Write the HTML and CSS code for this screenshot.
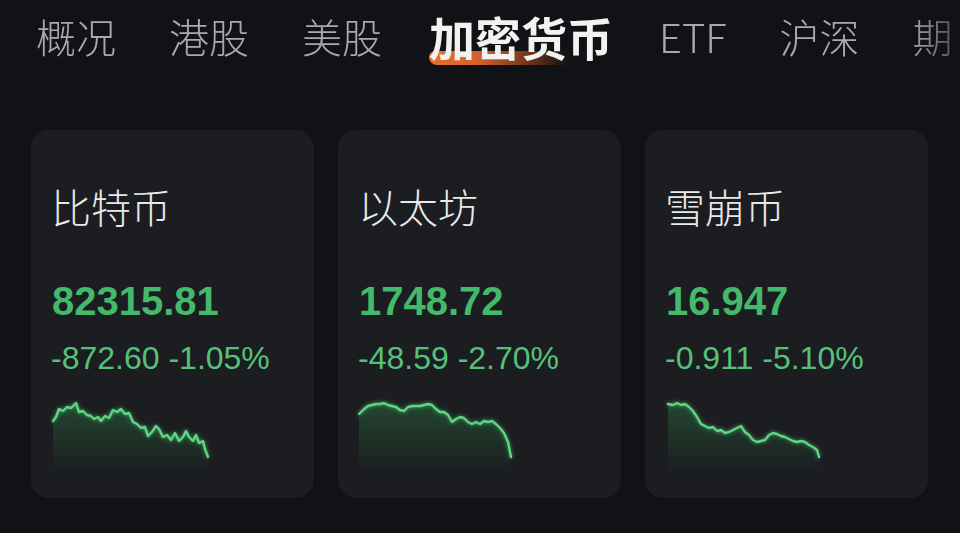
FILE: index.html
```html
<!DOCTYPE html>
<html lang="zh-CN">
<head>
<meta charset="utf-8">
<title>加密货币</title>
<link rel="stylesheet" href="styles.css">
</head>
<body>
<div class="page">
  <nav class="tabs">
    <span class="tab">概况</span>
    <span class="tab">港股</span>
    <span class="tab">美股</span>
    <span class="tab active"><span class="tab-bar"></span><span class="tab-text">加密货币</span></span>
    <span class="tab">ETF</span>
    <span class="tab">沪深</span>
    <span class="tab">期</span>
  </nav>

  <section class="cards">
    <article class="card">
      <h2 class="name">比特币</h2>
      <div class="price">82315.81</div>
      <div class="change">-872.60 -1.05%</div>
      <svg class="spark" viewBox="0 0 180 75" width="180" height="75">
        <defs>
          <linearGradient id="g1" x1="0" y1="0" x2="0" y2="1">
            <stop offset="0" stop-color="#2f9e55" stop-opacity="0.32"/>
            <stop offset="1" stop-color="#2f9e55" stop-opacity="0"/>
          </linearGradient>
        </defs>
        <path class="area" fill="url(#g1)" d="M2,24 L5,20 L8,12 L12,14 L16,10 L20,11 L25,6 L28,15 L32,14 L36,18 L40,19 L43,22 L47,20 L50,24 L54,19 L58,21 L62,13 L66,15 L70,12 L74,17 L78,16 L82,25 L86,27 L90,31 L94,30 L97,39 L101,35 L105,29 L108,32 L112,40 L116,38 L120,43 L124,36 L128,44 L132,40 L135,34 L138,40 L142,44 L145,38 L148,46 L152,44 L154,52 L157,60 L157,75 L2,75 Z"/>
        <path class="line" d="M2,24 L5,20 L8,12 L12,14 L16,10 L20,11 L25,6 L28,15 L32,14 L36,18 L40,19 L43,22 L47,20 L50,24 L54,19 L58,21 L62,13 L66,15 L70,12 L74,17 L78,16 L82,25 L86,27 L90,31 L94,30 L97,39 L101,35 L105,29 L108,32 L112,40 L116,38 L120,43 L124,36 L128,44 L132,40 L135,34 L138,40 L142,44 L145,38 L148,46 L152,44 L154,52 L157,60"/>
      </svg>
    </article>

    <article class="card">
      <h2 class="name">以太坊</h2>
      <div class="price">1748.72</div>
      <div class="change">-48.59 -2.70%</div>
      <svg class="spark" viewBox="0 0 180 75" width="180" height="75">
        <defs>
          <linearGradient id="g2" x1="0" y1="0" x2="0" y2="1">
            <stop offset="0" stop-color="#2f9e55" stop-opacity="0.32"/>
            <stop offset="1" stop-color="#2f9e55" stop-opacity="0"/>
          </linearGradient>
        </defs>
        <path class="area" fill="url(#g2)" d="M1,17 L6,12 L10,9 L14,8 L18,7 L22,7 L26,6 L30,8 L34,9 L38,10 L42,13 L46,14 L50,10 L54,9 L58,9 L62,9 L66,8 L70,7 L74,8 L78,12 L82,15 L86,15 L90,18 L94,25 L98,22 L102,20 L106,21 L110,25 L114,27 L118,25 L122,27 L126,24 L130,25 L134,24 L138,27 L142,31 L146,36 L150,45 L153,60 L153,75 L1,75 Z"/>
        <path class="line" d="M1,17 L6,12 L10,9 L14,8 L18,7 L22,7 L26,6 L30,8 L34,9 L38,10 L42,13 L46,14 L50,10 L54,9 L58,9 L62,9 L66,8 L70,7 L74,8 L78,12 L82,15 L86,15 L90,18 L94,25 L98,22 L102,20 L106,21 L110,25 L114,27 L118,25 L122,27 L126,24 L130,25 L134,24 L138,27 L142,31 L146,36 L150,45 L153,60"/>
      </svg>
    </article>

    <article class="card">
      <h2 class="name">雪崩币</h2>
      <div class="price">16.947</div>
      <div class="change">-0.911 -5.10%</div>
      <svg class="spark" viewBox="0 0 180 75" width="180" height="75">
        <defs>
          <linearGradient id="g3" x1="0" y1="0" x2="0" y2="1">
            <stop offset="0" stop-color="#2f9e55" stop-opacity="0.32"/>
            <stop offset="1" stop-color="#2f9e55" stop-opacity="0"/>
          </linearGradient>
        </defs>
        <path class="area" fill="url(#g3)" d="M3,7 L8,8 L12,6 L16,8 L20,7 L24,10 L28,14 L32,20 L36,27 L40,29 L44,31 L48,30 L52,34 L56,33 L60,36 L64,35 L68,33 L72,31 L76,29 L80,35 L84,38 L88,43 L92,45 L96,44 L100,43 L104,38 L108,36 L112,37 L116,39 L120,40 L124,42 L128,44 L132,45 L136,44 L140,45 L144,48 L148,50 L152,53 L154,60 L154,75 L3,75 Z"/>
        <path class="line" d="M3,7 L8,8 L12,6 L16,8 L20,7 L24,10 L28,14 L32,20 L36,27 L40,29 L44,31 L48,30 L52,34 L56,33 L60,36 L64,35 L68,33 L72,31 L76,29 L80,35 L84,38 L88,43 L92,45 L96,44 L100,43 L104,38 L108,36 L112,37 L116,39 L120,40 L124,42 L128,44 L132,45 L136,44 L140,45 L144,48 L148,50 L152,53 L154,60"/>
      </svg>
    </article>
  </section>
</div>
</body>
</html>
```

FILE: styles.css
```css
* { box-sizing: border-box; }
html, body {
  margin: 0;
  padding: 0;
  background: #111215;
  width: 960px;
  height: 533px;
  overflow: hidden;
}
.page {
  width: 960px;
  height: 533px;
  font-family: "Noto Sans CJK SC", "Liberation Sans", sans-serif;
}
.tabs {
  display: flex;
  align-items: center;
  gap: 53px;
  height: 72px;
  padding: 0 0 0 36px;
  white-space: nowrap;
  overflow: hidden;
  -webkit-mask-image: linear-gradient(to right, #000 calc(100% - 50px), rgba(0,0,0,0.35) 100%);
  mask-image: linear-gradient(to right, #000 calc(100% - 50px), rgba(0,0,0,0.35) 100%);
}
.tab {
  font-size: 40px;
  line-height: 40px;
  font-weight: 300;
  color: #a9a9ab;
  flex: none;
}
.tab.active {
  position: relative;
  font-size: 46px;
  line-height: 46px;
  font-weight: 700;
  color: #f2f2f2;
  margin-left: -6px;
  margin-right: -7px;
}
.tab-text { position: relative; }
.tab-bar {
  position: absolute;
  left: 0;
  top: 38px;
  width: 140px;
  height: 14px;
  border-radius: 7px 2px 2px 9px;
  background: linear-gradient(to right, #e8702a 0%, #d6612a 35%, rgba(180,80,30,0.6) 70%, rgba(120,50,20,0) 100%);
}
.cards {
  display: flex;
  gap: 24px;
  padding: 58px 0 0 31px;
}
.card {
  width: 283px;
  height: 368px;
  background: #1c1d20;
  border-radius: 18px;
  padding: 56px 0 0 20px;
}
.name {
  margin: 0;
  font-size: 40px;
  line-height: 40px;
  font-weight: 300;
  color: #e9e9ea;
}
.price {
  margin-top: 55px;
  padding-left: 1px;
  font-family: "Liberation Sans", Arial, sans-serif;
  font-weight: 700;
  font-size: 40px;
  line-height: 40px;
  color: #43b96b;
}
.change {
  margin-top: 21px;
  font-family: "Liberation Sans", Arial, sans-serif;
  font-size: 32px;
  line-height: 32px;
  color: #54c27b;
}
.spark {
  display: block;
  margin-top: 23px;
  overflow: visible;
}
.spark .line {
  fill: none;
  stroke: #5fd585;
  stroke-width: 2.4;
  stroke-linejoin: round;
  stroke-linecap: round;
  filter: drop-shadow(0 0 2px rgba(80, 220, 120, 0.7));
}
```
